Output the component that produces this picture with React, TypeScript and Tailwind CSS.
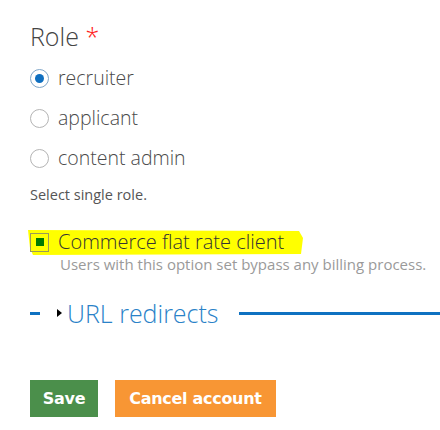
import React from "react";

function Radio({ checked, label }: { checked?: boolean; label: string }) {
  return (
    <label className="flex items-center h-[40px]">
      <span
        className={
          "w-[19px] h-[19px] rounded-full border flex items-center justify-center bg-white " +
          (checked ? "border-[#7fa6c8]" : "border-[#b4b4b4]")
        }
      >
        {checked && <span className="w-[9px] h-[9px] rounded-full bg-[#0f6fc0]" />}
      </span>
      <span className="ml-[9px] text-[19.5px] font-light text-[#4a4a4a] leading-none">{label}</span>
    </label>
  );
}

export default function App() {
  return (
    <div className="w-[440px] h-[430px] bg-white overflow-hidden pl-[30px] pt-[20px] font-['Open_Sans',sans-serif]">
      <div className="text-[25px] font-light text-[#444] leading-[32px]">
        Role <span className="text-[#ff2020]">*</span>
      </div>
      <div className="mt-[6px]">
        <Radio checked label="recruiter" />
        <Radio label="applicant" />
        <Radio label="content admin" />
      </div>
      <div className="mt-[8px] text-[14.5px] text-[#555] leading-[18px]">Select single role.</div>

      <div className="relative mt-[28px]">
        <svg
          className="absolute left-[-3px] top-[-4px]"
          width="278"
          height="28"
          viewBox="0 0 278 28"
        >
          <polygon points="1,2 272,3 276,10 274,26 6,27 3,20" fill="#ffff00" />
        </svg>
        <div className="relative flex items-center h-[20px]">
          <span className="w-[19px] h-[19px] border border-[#9a9a5a] flex items-center justify-center">
            <span className="w-[8px] h-[8px] bg-[#007a00]" />
          </span>
          <span className="ml-[9px] text-[20px] font-light text-[#333] leading-none">Commerce flat rate client</span>
        </div>
      </div>
      <div className="ml-[30px] mt-[2px] text-[15px] text-[#9a9a9a] leading-[20px]">
        Users with this option set bypass any billing process.
      </div>

      <div className="flex items-center mt-[22px] h-[34px]">
        <span className="w-[10px] h-[3px] bg-[#0f71c1]" />
        <span className="ml-[17px] w-0 h-0 border-y-[4px] border-y-transparent border-l-[5px] border-l-black" />
        <span className="ml-[5px] text-[25px] font-light text-[#2a82c8] leading-none">URL redirects</span>
        <span className="ml-[20px] flex-1 h-[3px] bg-[#0f71c1]" />
      </div>

      <div className="flex mt-[50px] gap-[17px] font-['DejaVu_Sans',Verdana,sans-serif] font-bold">
        <button className="h-[37px] w-[68px] bg-[#4b8f4b] text-white text-[16px] tracking-[-0.3px]">Save</button>
        <button className="h-[37px] w-[161px] bg-[#f89634] text-white text-[16px] tracking-[-0.3px]">Cancel account</button>
      </div>
    </div>
  );
}
